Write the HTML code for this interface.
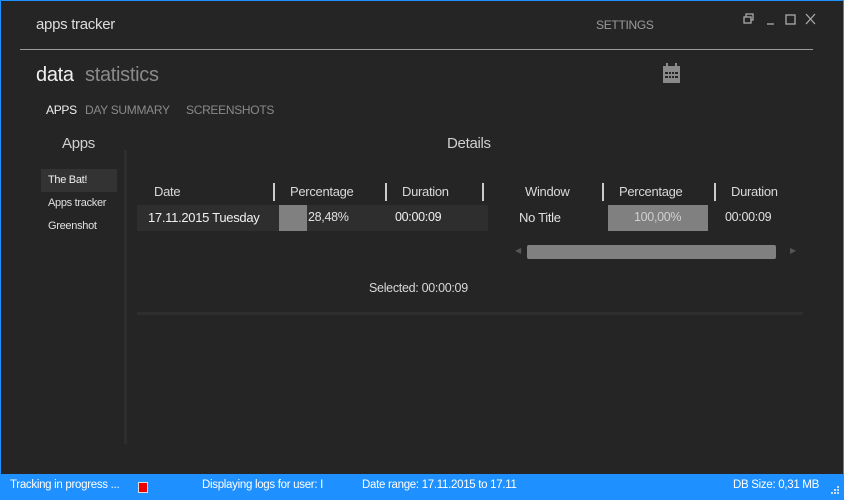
<!DOCTYPE html>
<html><head><style>
body{margin:0;width:844px;height:500px;overflow:hidden;background:#1e90ff;font-family:"Liberation Sans",sans-serif;}
#w{position:absolute;left:1px;top:1px;width:842px;height:473px;background:#252525;}
.t{position:absolute;white-space:nowrap;letter-spacing:-0.3px;}
</style></head><body>
<div id="w"></div>
<div class="t" style="left:36px;top:16px;font-size:15px;color:#dcdcdc">apps tracker</div>
<div class="t" style="left:596px;top:18px;font-size:12px;color:#9a9a9a">SETTINGS</div>
<svg class="t" style="left:742px;top:12px" width="80" height="16" viewBox="0 0 80 16" fill="none" stroke="#aaa" stroke-width="1.3">
<rect x="2" y="5" width="7" height="6"/><path d="M4 5V2h7v6H9"/>
<path d="M25 12h7"/>
<rect x="44" y="3" width="9" height="9"/>
<path d="M64 2l9 10M73 2l-9 10"/>
</svg>
<div style="position:absolute;left:20px;top:49px;width:793px;height:1px;background:#9a9a9a"></div>
<div class="t" style="left:36px;top:64px;font-size:20px;color:#f0f0f0">data</div>
<div class="t" style="left:85px;top:64px;font-size:20px;color:#8a8a8a">statistics</div>
<svg class="t" style="left:662px;top:63px" width="19" height="21" viewBox="0 0 19 21"><rect x="1" y="3" width="17" height="17" fill="#8a8a8a"/><rect x="4" y="0" width="2" height="5" fill="#8a8a8a"/><rect x="13" y="0" width="2" height="5" fill="#8a8a8a"/><g fill="#252525"><rect x="3" y="9" width="3" height="2"/><rect x="7" y="9" width="2" height="2"/><rect x="10" y="9" width="2" height="2"/><rect x="13" y="9" width="3" height="2"/><rect x="3" y="13" width="3" height="2"/><rect x="7" y="13" width="2" height="2"/><rect x="10" y="13" width="2" height="2"/><rect x="13" y="13" width="3" height="2"/></g></svg>
<div class="t" style="left:46px;top:103px;font-size:12px;color:#f0f0f0">APPS</div>
<div class="t" style="left:85px;top:103px;font-size:12px;color:#8a8a8a">DAY SUMMARY</div>
<div class="t" style="left:186px;top:103px;font-size:12px;color:#8a8a8a">SCREENSHOTS</div>
<div class="t" style="left:62px;top:135px;font-size:15px;color:#cfcfcf">Apps</div>
<div class="t" style="left:447px;top:135px;font-size:15px;color:#cfcfcf">Details</div>
<div style="position:absolute;left:124px;top:150px;width:3px;height:294px;background:#2e2e2e"></div>
<div style="position:absolute;left:41px;top:169px;width:76px;height:23px;background:#333"></div>
<div class="t" style="left:48px;top:174px;font-size:11px;color:#f0f0f0">The Bat!</div>
<div class="t" style="left:48px;top:197px;font-size:11px;color:#e0e0e0">Apps tracker</div>
<div class="t" style="left:48px;top:220px;font-size:11px;color:#e0e0e0">Greenshot</div>
<div class="t" style="left:154px;top:184px;font-size:13px;color:#d8d8d8">Date</div>
<div class="t" style="left:290px;top:184px;font-size:13px;color:#d8d8d8">Percentage</div>
<div class="t" style="left:402px;top:184px;font-size:13px;color:#d8d8d8">Duration</div>
<div class="t" style="left:525px;top:184px;font-size:13px;color:#d8d8d8">Window</div>
<div class="t" style="left:619px;top:184px;font-size:13px;color:#d8d8d8">Percentage</div>
<div class="t" style="left:731px;top:184px;font-size:13px;color:#d8d8d8">Duration</div>
<div style="position:absolute;left:273px;top:183px;width:2px;height:18px;background:#ccc"></div>
<div style="position:absolute;left:385px;top:183px;width:2px;height:18px;background:#ccc"></div>
<div style="position:absolute;left:482px;top:183px;width:2px;height:18px;background:#ccc"></div>
<div style="position:absolute;left:602px;top:183px;width:2px;height:18px;background:#ccc"></div>
<div style="position:absolute;left:714px;top:183px;width:2px;height:18px;background:#ccc"></div>
<div style="position:absolute;left:137px;top:205px;width:351px;height:26px;background:#2e2e2e"></div>
<div style="position:absolute;left:279px;top:205px;width:28px;height:26px;background:#808080"></div>
<div class="t" style="left:148px;top:210px;font-size:13px;color:#f0f0f0">17.11.2015 Tuesday</div>
<div class="t" style="left:308px;top:210px;font-size:12.5px;color:#e0e0e0">28,48%</div>
<div class="t" style="left:395px;top:210px;font-size:12.5px;color:#f0f0f0">00:00:09</div>
<div class="t" style="left:519px;top:210px;font-size:13px;color:#e0e0e0">No Title</div>
<div style="position:absolute;left:608px;top:205px;width:100px;height:26px;background:#808080"></div>
<div class="t" style="left:634px;top:210px;font-size:12.5px;color:#cfcfcf">100,00%</div>
<div class="t" style="left:725px;top:210px;font-size:12.5px;color:#e0e0e0">00:00:09</div>
<div class="t" style="left:515px;top:246px;font-size:8px;color:#555">◀</div>
<div style="position:absolute;left:527px;top:245px;width:249px;height:14px;background:#808080;border-radius:2px"></div>
<div class="t" style="left:790px;top:246px;font-size:8px;color:#555">▶</div>
<div class="t" style="left:369px;top:281px;font-size:12.5px;color:#d8d8d8">Selected: 00:00:09</div>
<div style="position:absolute;left:137px;top:312px;width:666px;height:3px;background:#2e2e2e"></div>
<div class="t" style="left:10px;top:479px;font-size:11.5px;color:#fff">Tracking in progress ...</div>
<div style="position:absolute;left:138px;top:482px;width:8px;height:9px;background:#e00;border:1px solid #ddd"></div>
<div class="t" style="left:202px;top:479px;font-size:11.5px;color:#fff">Displaying logs for user: I</div>
<div class="t" style="left:362px;top:479px;font-size:11.5px;color:#fff">Date range: 17.11.2015 to 17.11</div>
<div class="t" style="left:733px;top:479px;font-size:11.5px;color:#fff">DB Size: 0,31 MB</div>
<svg class="t" style="left:830px;top:485px" width="10" height="10"><g fill="#cde"><rect x="7" y="1" width="2" height="2"/><rect x="4" y="4" width="2" height="2"/><rect x="7" y="4" width="2" height="2"/><rect x="1" y="7" width="2" height="2"/><rect x="4" y="7" width="2" height="2"/><rect x="7" y="7" width="2" height="2"/></g></svg>
</body></html>
